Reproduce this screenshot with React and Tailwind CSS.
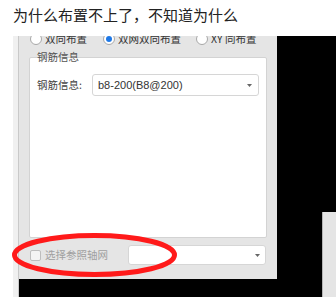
import React from "react";

const cjk = { fontFamily: '"Noto Sans CJK SC", "Noto Sans", sans-serif' };

function Radio({ checked, label }) {
  return (
    <div className="flex items-center gap-[3px]">
      <div className="w-[12px] h-[12px] rounded-full border border-[#a8a8a8] bg-white flex items-center justify-center">
        {checked && <div className="w-[6px] h-[6px] rounded-full bg-[#1e78e6]" />}
      </div>
      <span className="text-[10.5px] leading-[12px] text-[#333]">{label}</span>
    </div>
  );
}

function Caret() {
  return (
    <svg width="5" height="3" viewBox="0 0 5 3">
      <path d="M0 0 H5 L2.5 3 Z" fill="#666" />
    </svg>
  );
}

export default function App() {
  return (
    <div className="relative w-[336px] h-[297px] bg-white overflow-hidden" style={cjk}>
      {/* question title */}
      <div className="h-[36px] pl-[13px] pt-[4px] text-[15px] leading-[22px] text-[#222]">
        为什么布置不上了，不知道为什么
      </div>

      <div className="flex h-[261px]">
        <div className="w-[13px] bg-white" />
        <div className="w-[6px] bg-[#f0f0f0] border-r border-[#c9c9c9]" />

        <div className="flex flex-1 bg-black">
          {/* dialog */}
          <div className="flex flex-col w-[258px]">
            <div className="h-[243px] bg-[#e5e5e5] overflow-hidden">
              <div className="flex -mt-[4px] h-[14px] items-center">
                <div className="ml-[11px] w-[73px]"><Radio label="双向布置" /></div>
                <div className="w-[93px]"><Radio checked label="双网双向布置" /></div>
                <Radio label="XY 同布置" />
              </div>

              {/* group box */}
              <div className="ml-[10px] mt-[11px] w-[238px] h-[181px] bg-white border border-[#d3d3d3] rounded-[2px]">
                <div className="-mt-[8px] ml-[7px] text-[10.5px] leading-[14px] text-[#555]">钢筋信息</div>
                <div className="flex items-center mt-[10px] ml-[7px]">
                  <span className="w-[55px] text-[10.5px] text-[#444]">钢筋信息:</span>
                  <div className="flex items-center justify-between w-[167px] h-[22px] border border-[#d6d6d6] rounded-[3px] pl-[5px] pr-[6px]">
                    <span className="text-[11px] text-[#333]" style={{ fontFamily: '"Liberation Sans", Arial, sans-serif' }}>
                      b8-200(B8@200)
                    </span>
                    <Caret />
                  </div>
                </div>
              </div>

              {/* bottom row */}
              <div className="flex items-center mt-[7px] h-[20px]">
                <div className="ml-[11px] w-[11px] h-[11px] border border-[#bdbdbd] bg-[#f3f3f3] rounded-[2px]" />
                <span className="ml-[4px] w-[83px] text-[10.5px] text-[#a0a0a0]">选择参照轴网</span>
                <div className="flex items-center justify-end w-[138px] h-[20px] bg-white border border-[#d6d6d6] rounded-[3px] pr-[5px]">
                  <Caret />
                </div>
              </div>
            </div>
            <div className="flex-1 bg-black" />
          </div>

          <div className="flex-1 flex flex-col">
            <div className="h-[176px]" />
            <div className="ml-[45px] flex-1 bg-[#e5e5e5] border-l border-[#b5b5b5]" />
          </div>
        </div>
      </div>

      {/* red annotation ellipse */}
      <svg className="absolute left-[12px] top-[233px]" width="165" height="44" viewBox="0 0 165 44">
        <ellipse cx="82.5" cy="22" rx="80" ry="19.5" fill="none" stroke="#ff1a1a" strokeWidth="5" />
      </svg>
    </div>
  );
}
